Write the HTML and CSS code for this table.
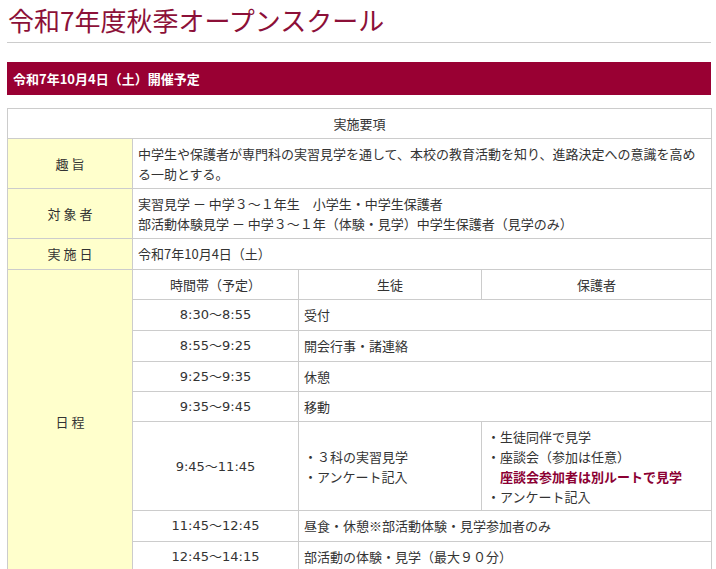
FILE: index.html
```html
<!DOCTYPE html>
<html lang="ja">
<head>
<meta charset="utf-8">
<title>令和7年度秋季オープンスクール</title>
<link rel="stylesheet" href="styles.css">
</head>
<body>
<div class="page">
  <h1 class="title">令和7年度秋季オープンスクール</h1>
  <h2 class="banner">令和7年10月4日（土）開催予定</h2>
  <table class="info">
    <colgroup>
      <col class="col-label">
      <col class="col-time">
      <col class="col-student">
      <col class="col-parent">
    </colgroup>
    <tr><td class="head" colspan="4">実施要項</td></tr>
    <tr><th class="label">趣 旨</th><td colspan="3">中学生や保護者が専門科の実習見学を通して、本校の教育活動を知り、進路決定への意識を高め<br>る一助とする。</td></tr>
    <tr><th class="label">対 象 者</th><td colspan="3">実習見学 － 中学３～１年生　小学生・中学生保護者<br>部活動体験見学 － 中学３～１年（体験・見学）中学生保護者（見学のみ）</td></tr>
    <tr class="tall"><th class="label">実 施 日</th><td colspan="3">令和7年10月4日（土）</td></tr>
    <tr><th class="label" rowspan="9">日 程</th><td class="center">時間帯（予定）</td><td class="center">生徒</td><td class="center">保護者</td></tr>
    <tr class="tall"><td class="time">8:30～8:55</td><td colspan="2">受付</td></tr>
    <tr class="tall"><td class="time">8:55～9:25</td><td colspan="2">開会行事・諸連絡</td></tr>
    <tr><td class="time">9:25～9:35</td><td colspan="2">休憩</td></tr>
    <tr><td class="time">9:35～9:45</td><td colspan="2">移動</td></tr>
    <tr class="tight"><td class="time">9:45～11:45</td><td>・３科の実習見学<br>・アンケート記入</td><td>・生徒同伴で見学<br>・座談会（参加は任意）<br><strong class="note">　座談会参加者は別ルートで見学</strong><br>・アンケート記入</td></tr>
    <tr class="tall"><td class="time">11:45～12:45</td><td colspan="2">昼食・休憩※部活動体験・見学参加者のみ</td></tr>
    <tr class="tall"><td class="time">12:45～14:15</td><td colspan="2">部活動の体験・見学（最大９０分）</td></tr>
  </table>
</div>
</body>
</html>
```

FILE: styles.css
```css
html, body {
  margin: 0;
  padding: 0;
  background: #fff;
}
body {
  font-family: "Noto Sans CJK JP", "Noto Sans", sans-serif;
  color: #333;
  font-size: 13px;
}
.page {
  width: 704px;
  padding-left: 7px;
}
.title {
  margin: 0;
  padding: 2px 0 4px 1px;
  font-size: 26px;
  line-height: 36px;
  font-weight: normal;
  color: #8c1038;
  border-bottom: 1px solid #ccc;
}
.banner {
  margin: 19px 0 0;
  height: 33px;
  line-height: 33px;
  padding-left: 6px;
  background: #990033;
  color: #fff;
  font-size: 13px;
  font-weight: bold;
}
.info {
  margin-top: 13px;
  width: 704px;
  border-collapse: collapse;
  table-layout: fixed;
}
.col-label { width: 125px; }
.col-time { width: 166px; }
.col-student { width: 183px; }
.col-parent { width: 230px; }
.info td, .info th {
  border: 1px solid #ccc;
  padding: 5px 5px 4px;
  line-height: 20px;
  font-size: 13px;
  text-align: left;
  vertical-align: middle;
  font-weight: normal;
  color: #333;
}
.info .tall td, .info .tall th {
  padding-bottom: 5px;
}
.info .tight td {
  padding-bottom: 3px;
}
.info .head {
  text-align: center;
}
.info .label {
  background: #ffffcc;
  text-align: center;
}
.info .center {
  text-align: center;
}
.info .time {
  text-align: center;
  font-family: "DejaVu Sans", "Noto Sans CJK JP", sans-serif;
}
.note {
  color: #8b0033;
  font-weight: bold;
}
```
